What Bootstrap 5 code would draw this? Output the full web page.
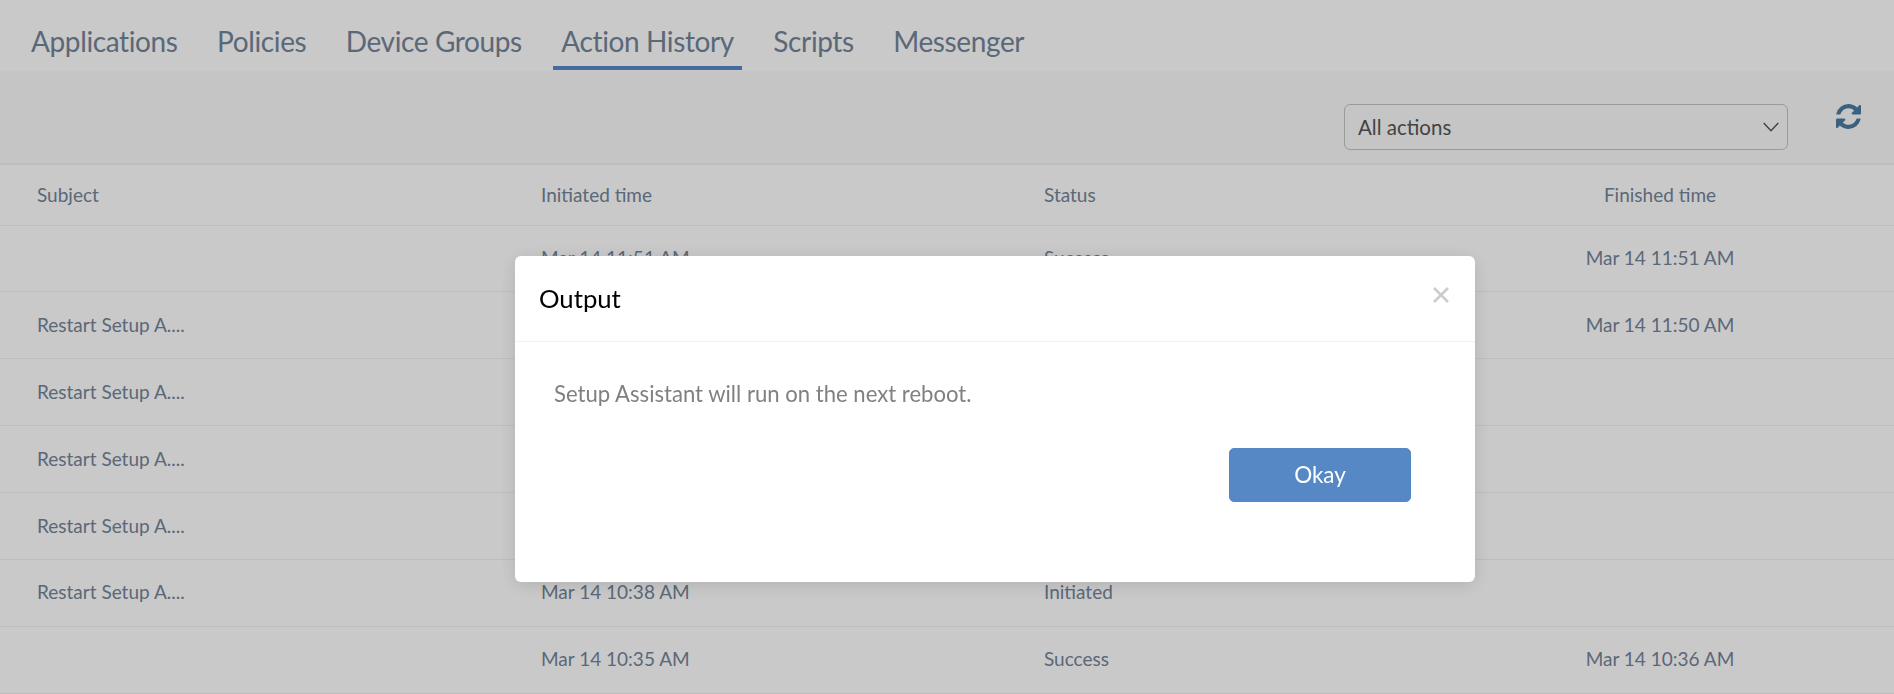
<!DOCTYPE html>
<html lang="en">
<head>
<meta charset="utf-8">
<title>Action History</title>
<link rel="stylesheet" href="https://cdn.jsdelivr.net/npm/bootstrap@5.3.0/dist/css/bootstrap.min.css">
<style>
html, body { height: 694px; overflow: hidden; }
body { font-family: "Lato", "Liberation Sans", sans-serif; background: #fff; }
.tabbar { height: 71px; padding-left: 23px; gap: 23.5px; background: #fff; }
.tabbar .nav-link { color: #748499; font-size: 28px; letter-spacing: -.38px; line-height: 34px; padding: 24px 8px 8px; height: 70px; }
.tabbar .nav-link.active { color: #748499; border-bottom: 4px solid #5588c5; padding-bottom: 4px; }
.toolbar { height: 94px; background: #fafafa; border-bottom: 2px solid #f0f0f0; padding: 33px 33px 0 0; }
.action-select { width: 444px; height: 46px; font-size: 20.5px; color: #555; padding: 4px 36px 4px 13px; background-color: transparent; background-image: url("data:image/svg+xml,%3csvg xmlns='http://www.w3.org/2000/svg' viewBox='0 0 16 10'%3e%3cpath fill='none' stroke='%23555' stroke-width='1.4' d='M.7.9 8 8.8 15.3.9'/%3e%3c/svg%3e"); background-size: 16px 10px; background-position: right 8px center; border-color: #c4c4c4; margin-right: 48px; border-radius: 6px; }
.refresh-icon { width: 25px; height: 25px; fill: #4a7ba1; }
.data-table { table-layout: fixed; width: 100%; margin: 0; --bs-table-bg: transparent; }
.data-table th, .data-table td { color: #748499; font-size: 19px; font-weight: 400; vertical-align: middle; padding: 0 0 0 37px; border-bottom: 1px solid #f0f0f0; height: 66.86px; }
.data-table th { height: 60px; }
.data-table .col-a { width: 504px; }
.data-table .col-b { width: 503px; }
.data-table .col-c { width: 419px; }
.data-table th.end-col, .data-table td.end-col { text-align: center; padding: 0; }
.modal-backdrop.show { opacity: .21; }
.output-dialog { max-width: 960px; width: 960px; margin: 256px 0 0 515px; }
.output-dialog .modal-content { height: 326px; border: 0; border-radius: 6px; box-shadow: 0 3px 18px rgba(0,0,0,.12); display: block; }
.output-dialog .modal-header { height: 86px; padding: 0 26px 0 24px; border-bottom: 1px solid #f2f2f2; align-items: flex-start; }
.output-dialog .modal-title { font-size: 25.7px; color: #000; font-weight: 400; line-height: 30px; margin-top: 27px; }
.close-x { background: none; border: 0; padding: 0; margin: 31px 0 0 auto; line-height: 0; }
.close-x svg { width: 16px; height: 16px; stroke: #ccc; stroke-width: 2.6; }
.output-dialog .modal-body { padding: 38px 64px 0 39px; }
.output-text { font-size: 22.1px; line-height: 28px; color: #808080; margin: 0 0 40px; }
.btn-okay { width: 182px; height: 54px; background: #5588c5; border-color: #5588c5; color: #fff; font-size: 22.5px; border-radius: 5px; }
</style>
</head>
<body>
<nav class="nav tabbar flex-nowrap">
  <a class="nav-link" href="#">Applications</a>
  <a class="nav-link" href="#">Policies</a>
  <a class="nav-link" href="#">Device Groups</a>
  <a class="nav-link active" href="#">Action History</a>
  <a class="nav-link" href="#">Scripts</a>
  <a class="nav-link" href="#">Messenger</a>
</nav>
<div class="toolbar d-flex justify-content-end align-items-start">
  <select class="form-select action-select"><option>All actions</option></select>
  <svg class="refresh-icon" viewBox="128 128 1536 1536" aria-hidden="true"><path d="M1639 1056q0 5-1 7-64 268-268 434.5t-478 166.5q-146 0-282.5-55t-243.5-157l-129 129q-19 19-45 19t-45-19-19-45v-448q0-26 19-45t45-19h448q26 0 45 19t19 45-19 45l-137 137q71 66 161 102t187 36q134 0 250-65t186-179q11-17 53-117 8-23 30-23h192q13 0 22.5 9.5t9.5 22.5zm25-800v448q0 26-19 45t-45 19h-448q-26 0-45-19t-19-45 19-45l138-138q-148-137-349-137-134 0-250 65t-186 179q-11 17-53 117-8 23-30 23h-199q-13 0-22.5-9.5t-9.5-22.5v-7q65-268 270-434.5t480-166.5q146 0 284 55.5t245 156.5l130-129q19-19 45-19t45 19 19 45z"/></svg>
</div>
<table class="table data-table">
  <thead>
    <tr><th class="col-a">Subject</th><th class="col-b">Initiated time</th><th class="col-c">Status</th><th class="end-col">Finished time</th></tr>
  </thead>
  <tbody>
    <tr><td></td><td>Mar 14 11:51 AM</td><td>Success</td><td class="end-col">Mar 14 11:51 AM</td></tr>
    <tr><td>Restart Setup A....</td><td></td><td></td><td class="end-col">Mar 14 11:50 AM</td></tr>
    <tr><td>Restart Setup A....</td><td></td><td></td><td class="end-col"></td></tr>
    <tr><td>Restart Setup A....</td><td></td><td></td><td class="end-col"></td></tr>
    <tr><td>Restart Setup A....</td><td></td><td></td><td class="end-col"></td></tr>
    <tr><td>Restart Setup A....</td><td>Mar 14 10:38 AM</td><td>Initiated</td><td class="end-col"></td></tr>
    <tr><td></td><td>Mar 14 10:35 AM</td><td>Success</td><td class="end-col">Mar 14 10:36 AM</td></tr>
  </tbody>
</table>
<div class="modal-backdrop show"></div>
<div class="modal d-block" tabindex="-1" role="dialog">
  <div class="modal-dialog output-dialog">
    <div class="modal-content">
      <div class="modal-header">
        <h5 class="modal-title">Output</h5>
        <button type="button" class="close-x" aria-label="Close"><svg viewBox="0 0 16 16"><path d="M1 1 15 15M15 1 1 15"/></svg></button>
      </div>
      <div class="modal-body">
        <p class="output-text">Setup Assistant will run on the next reboot.</p>
        <div class="d-flex justify-content-end"><button type="button" class="btn btn-primary btn-okay">Okay</button></div>
      </div>
    </div>
  </div>
</div>
<script src="https://cdn.jsdelivr.net/npm/bootstrap@5.3.0/dist/js/bootstrap.bundle.min.js"></script>
</body>
</html>
